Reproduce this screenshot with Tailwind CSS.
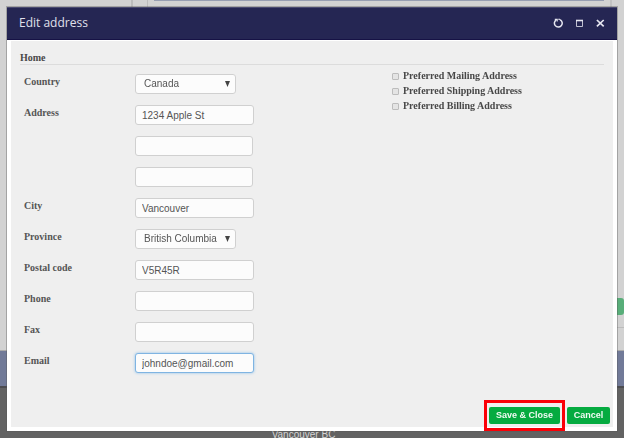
<!DOCTYPE html>
<html lang="en">
<head>
<meta charset="utf-8">
<title>Edit address</title>
<script src="https://cdn.jsdelivr.net/npm/@tailwindcss/browser@4"></script>
</head>
<body class="relative h-screen overflow-hidden bg-[#d2d2d2] font-['Liberation_Sans',Arial,sans-serif]">

<!-- Dimmed page behind the dialog -->
<div class="flex h-full flex-col">
  <div class="flex h-[351px] flex-col">
    <div class="flex h-2">
      <div class="w-[133px] border-r-2 border-[#bcbcbc]"></div>
      <div class="w-[15px] border-r border-[#bcbcbc]"></div>
      <div class="mx-[6px] grow border-t border-[#979eb1]"></div>
      <div class="w-[14px] border-l-2 border-[#c2c2c2]"></div>
    </div>
    <div class="flex grow flex-col items-end justify-end border-b border-[#aaa]">
      <div class="h-[17px] w-[10px] rounded-[3px] bg-[#58ae79]"></div>
      <div class="mt-3 mb-[22px] w-5 border-t border-[#bcbcbc]"></div>
    </div>
  </div>
  <div class="h-[37px] border-b-2 border-[#4c4c50] bg-[#717a98]"></div>
  <div class="flex grow flex-col items-center justify-end bg-[#626262]">
    <p class="-mb-[3px] pr-[17px] text-[10px] leading-3 text-[#d4d4d4]">Vancouver BC</p>
  </div>
</div>

<!-- Dialog -->
<section role="dialog" aria-labelledby="title" class="absolute inset-[7px] flex flex-col bg-white outline outline-[#55555560]">
  <header class="flex h-[33px] shrink-0 items-center justify-between border-y border-t-[#4a4a70] border-b-[#161245] bg-[#252653] px-3 pb-[2px]">
    <h1 id="title" class="font-['Open_Sans',sans-serif] text-[12px] leading-4 text-[#e0e0ec]">Edit address</h1>
    <div class="flex items-center gap-[11px] text-[#e6e6f0]">
      <button type="button" aria-label="Reload" class="size-[10px]">
        <svg viewBox="0 0 10 10" class="size-[10px]" fill="none" stroke="currentColor" stroke-width="1.5"><path d="M3.4 1.8A3.9 3.9 0 1 0 7.4 1.9"/><path d="M1.8 1.4H4.2V3.4M5.2 1.2H6.6L7.8 2.6" stroke-width="1.1"/></svg>
      </button>
      <button type="button" aria-label="Maximize" class="size-[10px]">
        <svg viewBox="0 0 10 10" class="size-[10px]" fill="none" stroke="currentColor"><path d="M2.5 2.5V8.5H8.5V2.5" opacity=".8"/><path d="M2 2.5H9" stroke-width="1.6"/></svg>
      </button>
      <button type="button" aria-label="Close" class="size-[10px]">
        <svg viewBox="0 0 10 10" class="size-[10px]" fill="none" stroke="currentColor" stroke-width="1.7"><path d="M1.9 2L8.7 8.4M8.7 2L1.9 8.4"/></svg>
      </button>
    </div>
  </header>

  <form class="m-1 mt-[1px] flex grow flex-col bg-[#efefef] px-[9px] pt-[11px] font-['Liberation_Serif',serif] text-[10px] leading-3 font-bold text-[#484848]">
    <h2 class="border-b border-[#dcdcdc]">Home</h2>
    <div class="flex grow pt-[9px]">
      <div class="flex w-[372px] shrink-0 flex-col gap-[11px] pl-1 text-[#555]">
        <div class="flex h-5">
          <label for="country" class="w-[111px] pt-[2px]">Country</label>
          <div class="relative h-5 w-[101px]">
            <select id="country" class="h-full w-full appearance-none rounded-[3px] border border-[#d0d0d0] bg-[#fcfcfc] pl-2 font-['Liberation_Sans',sans-serif] text-[10px] font-normal outline-none"><option>Canada</option></select>
            <svg viewBox="0 0 5 6" class="pointer-events-none absolute top-[7px] right-[6px] h-[6px] w-[5px]" fill="#444"><path d="M0 0H5L2.5 6Z"/></svg>
          </div>
        </div>
        <div class="flex">
          <label for="a1" class="w-[111px] pt-[2px]">Address</label>
          <div class="flex flex-col gap-[11px] font-['Liberation_Sans',sans-serif] font-normal">
            <input id="a1" value="1234 Apple St" class="h-5 w-[119px] rounded-[3px] border border-[#d0d0d0] bg-[#fcfcfc] px-[6px] outline-none">
            <input aria-label="Address line 2" class="h-5 w-[118px] rounded-[3px] border border-[#d0d0d0] bg-[#fcfcfc] px-[6px] outline-none">
            <input aria-label="Address line 3" class="h-5 w-[118px] rounded-[3px] border border-[#d0d0d0] bg-[#fcfcfc] px-[6px] outline-none">
          </div>
        </div>
        <div class="flex h-5">
          <label for="city" class="w-[111px] pt-[2px]">City</label>
          <input id="city" value="Vancouver" class="h-5 w-[119px] rounded-[3px] border border-[#d0d0d0] bg-[#fcfcfc] px-[6px] font-['Liberation_Sans',sans-serif] font-normal outline-none">
        </div>
        <div class="flex h-5">
          <label for="province" class="w-[111px] pt-[2px]">Province</label>
          <div class="relative h-5 w-[101px]">
            <select id="province" class="h-full w-full appearance-none rounded-[3px] border border-[#d0d0d0] bg-[#fcfcfc] pl-2 font-['Liberation_Sans',sans-serif] text-[10px] font-normal outline-none"><option>British Columbia</option></select>
            <svg viewBox="0 0 5 6" class="pointer-events-none absolute top-[7px] right-[6px] h-[6px] w-[5px]" fill="#444"><path d="M0 0H5L2.5 6Z"/></svg>
          </div>
        </div>
        <div class="flex h-5">
          <label for="postal" class="w-[111px] pt-[2px]">Postal code</label>
          <input id="postal" value="V5R45R" class="h-5 w-[119px] rounded-[3px] border border-[#d0d0d0] bg-[#fcfcfc] px-[6px] font-['Liberation_Sans',sans-serif] font-normal outline-none">
        </div>
        <div class="flex h-5">
          <label for="phone" class="w-[111px] pt-[2px]">Phone</label>
          <input id="phone" type="tel" class="h-5 w-[119px] rounded-[3px] border border-[#d0d0d0] bg-[#fcfcfc] px-[6px] font-['Liberation_Sans',sans-serif] font-normal outline-none">
        </div>
        <div class="flex h-5">
          <label for="fax" class="w-[111px] pt-[2px]">Fax</label>
          <input id="fax" type="tel" class="h-5 w-[119px] rounded-[3px] border border-[#d0d0d0] bg-[#fcfcfc] px-[6px] font-['Liberation_Sans',sans-serif] font-normal outline-none">
        </div>
        <div class="flex h-5">
          <label for="email" class="w-[111px] pt-[2px]">Email</label>
          <input id="email" type="text" value="johndoe@gmail.com" class="h-5 w-[119px] rounded-[3px] border border-[#7fb4e2] bg-[#fcfcfc] px-[6px] font-['Liberation_Sans',sans-serif] font-normal shadow-[0_0_3px_#8fc0ea] outline-none">
        </div>
      </div>
      <div class="-mt-1 flex flex-col gap-[3px]">
        <label class="flex items-center gap-1"><input type="checkbox" class="size-[7px] appearance-none rounded-[1px] border border-[#bcbcbc] bg-[#e4e4e4]">Preferred Mailing Address</label>
        <label class="flex items-center gap-1"><input type="checkbox" class="size-[7px] appearance-none rounded-[1px] border border-[#bcbcbc] bg-[#e4e4e4]">Preferred Shipping Address</label>
        <label class="flex items-center gap-1"><input type="checkbox" class="size-[7px] appearance-none rounded-[1px] border border-[#bcbcbc] bg-[#e4e4e4]">Preferred Billing Address</label>
      </div>
    </div>
  </form>

  <footer class="absolute right-[7px] bottom-0 flex items-center gap-[2px] font-['Liberation_Sans',sans-serif] text-[9px] leading-[17px] font-bold text-[#f0faf3]">
    <div class="border-[3px] border-[#fb0007] px-[2px] py-1">
      <button type="button" class="block h-[17px] w-[71px] rounded-[2px] bg-[#05ab40]">Save &amp; Close</button>
    </div>
    <button type="button" class="h-[17px] w-[43px] rounded-[2px] bg-[#05ab40]">Cancel</button>
  </footer>
</section>
<script>
  const email = document.getElementById('email');
  email.focus({ preventScroll: true });
  email.setSelectionRange(email.value.length, email.value.length);
</script>
</body>
</html>
